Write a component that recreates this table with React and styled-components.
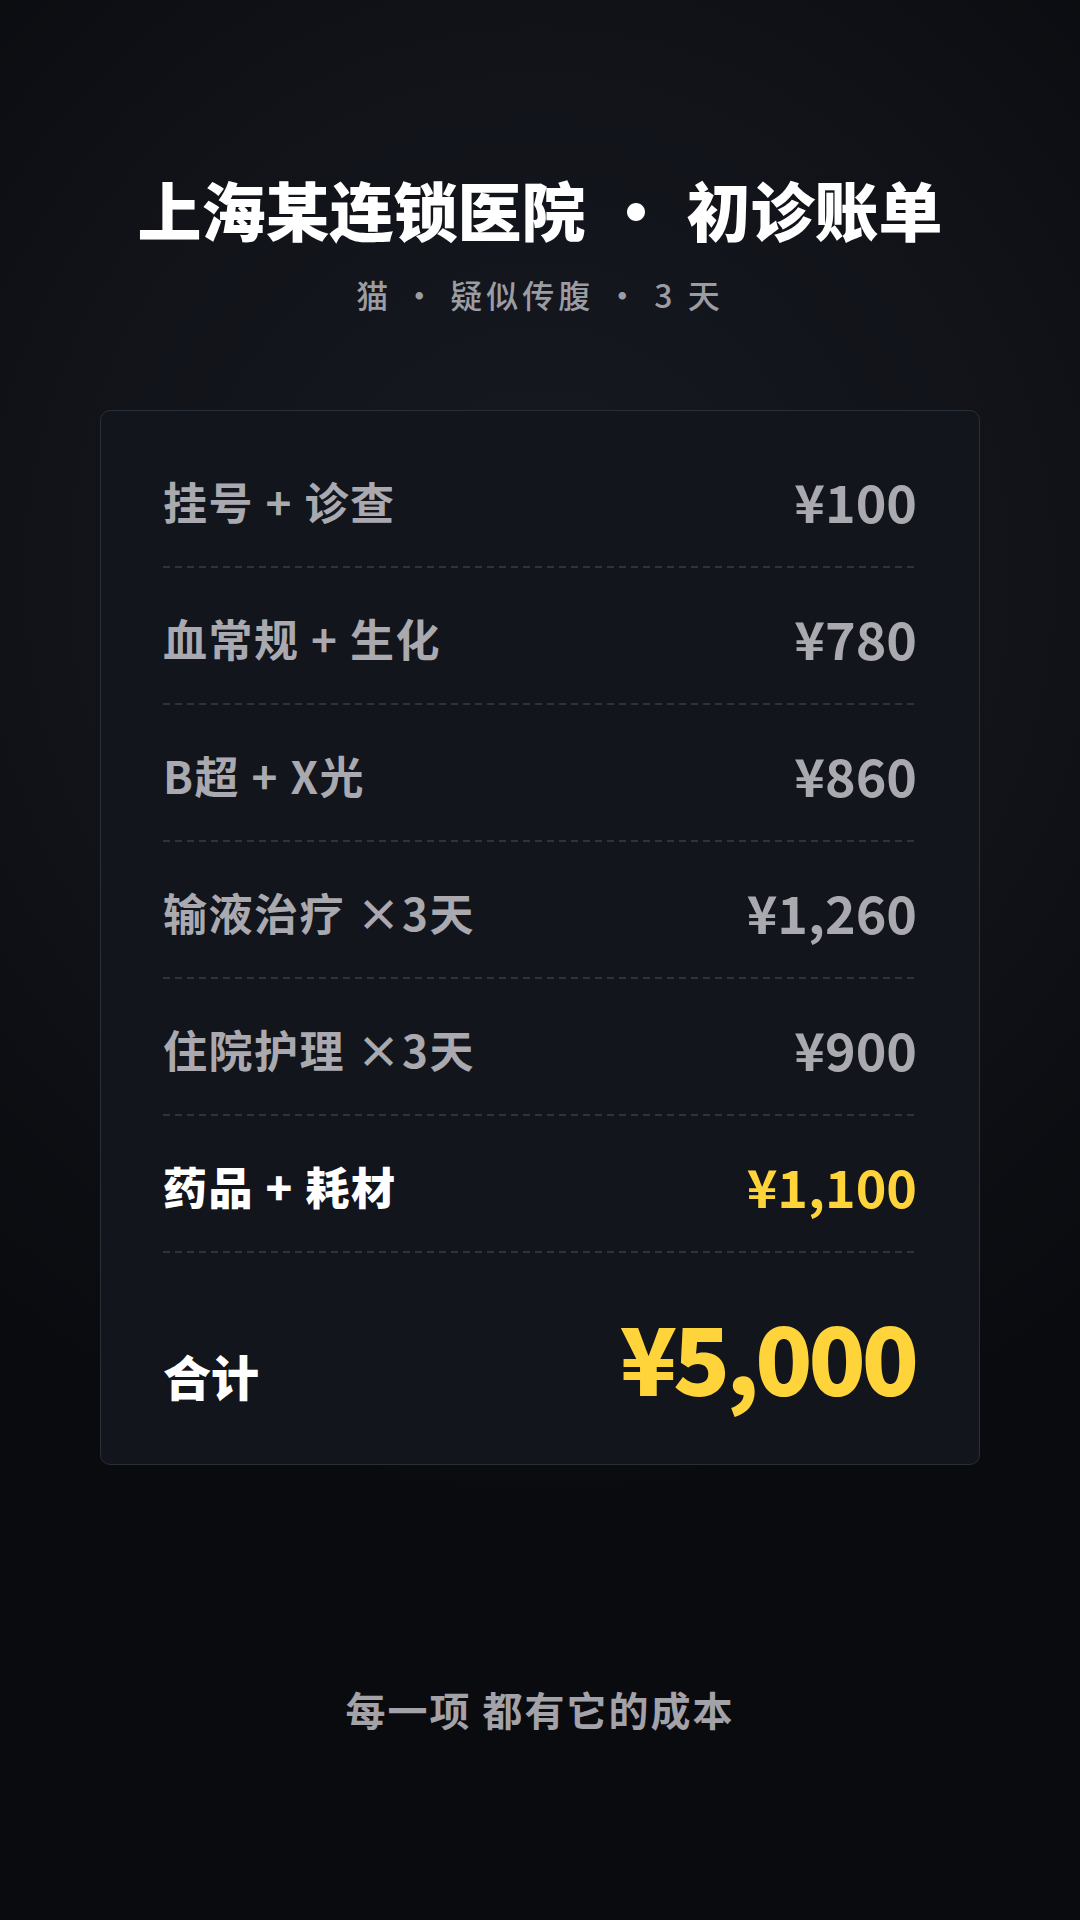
import React from "react";
import styled, { createGlobalStyle } from "styled-components";

const Global = createGlobalStyle`
  html, body { margin: 0; padding: 0; background: #0a0b0f; }
  body { font-family: "Noto Sans CJK SC", "Noto Sans", sans-serif; }
`;

const Page = styled.div`
  width: 1080px;
  height: 1920px;
  box-sizing: border-box;
  display: flex;
  flex-direction: column;
  align-items: center;
  padding-top: 170px;
  background: radial-gradient(ellipse 80% 48% at 50% 30%, #171a22 0%, #111319 55%, #0a0b0f 100%);
`;

const Title = styled.h1`
  margin: 0;
  font-size: 64px;
  line-height: 76px;
  font-weight: 900;
  color: #ffffff;
  white-space: nowrap;
`;

const Sep = styled.span`
  display: inline-block;
  width: ${(p) => p.$w}px;
  text-align: center;
`;

const Subtitle = styled.div`
  margin-top: 28px;
  font-size: 32px;
  line-height: 40px;
  font-weight: 500;
  letter-spacing: 4px;
  color: #9c9ca3;
  white-space: nowrap;
`;

const Card = styled.div`
  margin-top: 96px;
  width: 880px;
  box-sizing: border-box;
  padding: 20px 62px 0;
  background: #12151c;
  border: 1.5px solid #2a2e37;
  border-radius: 10px;
`;

const Row = styled.div`
  height: 137px;
  box-sizing: border-box;
  padding: 4px 0 2px;
  display: flex;
  align-items: center;
  justify-content: space-between;
  background: repeating-linear-gradient(to right, #2e323b 0 7px, transparent 7px 12px) left bottom / 100% 2px no-repeat;
`;

const Label = styled.span`
  font-size: 44px;
  font-weight: ${(p) => (p.$hl ? 900 : 700)};
  letter-spacing: 1.5px;
  color: ${(p) => (p.$hl ? "#ffffff" : "#a9a9af")};
  white-space: pre;
`;

const Amount = styled.span`
  font-size: 52px;
  font-weight: 700;
  color: ${(p) => (p.$hl ? "#ffd43b" : "#a9a9af")};
`;

const TotalRow = styled.div`
  display: flex;
  align-items: baseline;
  justify-content: space-between;
  padding: 55px 0 62px;
`;

const TotalLabel = styled.span`
  font-size: 48px;
  line-height: 1;
  font-weight: 900;
  color: #ffffff;
`;

const TotalAmount = styled.span`
  font-size: 94px;
  line-height: 1;
  font-weight: 900;
  letter-spacing: -4px;
  margin-right: 2px;
  color: #ffd43b;
`;

const Footer = styled.div`
  margin-top: 220px;
  font-size: 40px;
  line-height: 48px;
  font-weight: 700;
  letter-spacing: 2px;
  color: #a2a2a8;
`;

const items = [
  { label: "挂号 + 诊查", amount: "¥100" },
  { label: "血常规 + 生化", amount: "¥780" },
  { label: "B超 + X光", amount: "¥860" },
  { label: "输液治疗 ×3天", amount: "¥1,260" },
  { label: "住院护理 ×3天", amount: "¥900" },
  { label: "药品 + 耗材", amount: "¥1,100", hl: true },
];

export default function App() {
  return (
    <>
      <Global />
      <Page>
        <Title>
          上海某连锁医院<Sep $w={101}>•</Sep>初诊账单
        </Title>
        <Subtitle>
          猫<Sep $w={58}>·</Sep>疑似传腹<Sep $w={60}>·</Sep>3 天
        </Subtitle>
        <Card>
          {items.map((it) => (
            <Row key={it.label}>
              <Label $hl={it.hl}>{it.label}</Label>
              <Amount $hl={it.hl}>{it.amount}</Amount>
            </Row>
          ))}
          <TotalRow>
            <TotalLabel>合计</TotalLabel>
            <TotalAmount>¥5,000</TotalAmount>
          </TotalRow>
        </Card>
        <Footer>每一项 都有它的成本</Footer>
      </Page>
    </>
  );
}
